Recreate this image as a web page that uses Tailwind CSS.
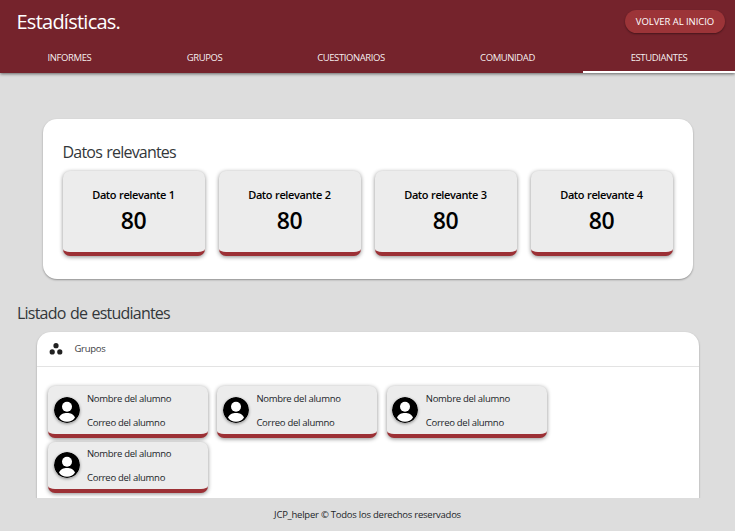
<!DOCTYPE html>
<html lang="es">
<head>
<meta charset="utf-8">
<title>Estadísticas</title>
<script src="https://cdn.jsdelivr.net/npm/@tailwindcss/browser@4"></script>
</head>
<body class="flex h-[531px] w-[735px] flex-col overflow-hidden bg-[#dddddd] font-['Open_Sans','Noto_Sans',sans-serif] text-[#212529]">
<svg class="hidden">
  <symbol id="avatar" viewBox="0 0 26 26">
    <circle cx="13" cy="13" r="13" fill="#000"/>
    <circle cx="13" cy="9.8" r="5" fill="#fff"/>
    <path d="M5 20.6C6.300 17.200 9.400 16 13 16s6.700 1.200 8 4.600C19.200 23.600 16.200 24.800 13 24.800S6.800 23.600 5 20.600Z" fill="#fff"/>
  </symbol>
</svg>
<header class="relative z-10 h-[73px] shrink-0 bg-[#75232c] text-white shadow-[0_1px_3px_rgba(0,0,0,0.55)]">
  <div class="flex h-[42px] items-center justify-between pr-[10px] pl-[16.500px]">
    <h1 class="pt-px text-[20px] leading-[42px] tracking-[-0.75px]"><span>Estadísticas.</span></h1>
    <button class="h-[23px] w-[100px] rounded-full bg-[#9c3438] text-[9.500px] leading-[23px] tracking-[-0.05px] whitespace-nowrap shadow-[0_1px_2px_rgba(0,0,0,0.4)]"><span>VOLVER AL INICIO</span></button>
  </div>
  <nav class="grid h-[31px] grid-cols-[139px_131px_162px_151px_152px] text-center text-[9.500px] leading-[31px] tracking-[-0.4px] text-white/95">
    <a><span>INFORMES</span></a>
    <a><span>GRUPOS</span></a>
    <a><span>CUESTIONARIOS</span></a>
    <a><span>COMUNIDAD</span></a>
    <a class="h-[31px] border-b-2 border-white"><span>ESTUDIANTES</span></a>
  </nav>
</header>
<main class="min-h-0 flex-1 overflow-hidden">
  <section class="mt-[46px] ml-[42.500px] h-[159.500px] w-[650px] rounded-[14px] bg-white pt-[23px] pr-[20px] pl-[20px] shadow-[0_1px_2px_rgba(0,0,0,0.35)]">
    <h2 class="h-[29px] text-[16px] leading-[21px] tracking-[-0.8px] text-[#33373a] [word-spacing:1px]"><span>Datos relevantes</span></h2>
    <div class="grid grid-cols-[142px_142px_142px_142px] gap-[14px] text-center text-black">
      <article class="h-[85px] rounded-[7px] border-b-4 border-[#9c3035] bg-[#ececec] pt-[15px] shadow-[0_1px_4px_rgba(0,0,0,0.45)]">
        <h3 class="text-[11px] leading-[18px] font-semibold tracking-[-0.4px] [word-spacing:0.5px]"><span>Dato relevante 1</span></h3>
        <p class="text-[23px] leading-[33px] font-semibold tracking-[-0.4px]"><span>80</span></p>
      </article>
      <article class="h-[85px] rounded-[7px] border-b-4 border-[#9c3035] bg-[#ececec] pt-[15px] shadow-[0_1px_4px_rgba(0,0,0,0.45)]">
        <h3 class="text-[11px] leading-[18px] font-semibold tracking-[-0.4px] [word-spacing:0.5px]"><span>Dato relevante 2</span></h3>
        <p class="text-[23px] leading-[33px] font-semibold tracking-[-0.4px]"><span>80</span></p>
      </article>
      <article class="h-[85px] rounded-[7px] border-b-4 border-[#9c3035] bg-[#ececec] pt-[15px] shadow-[0_1px_4px_rgba(0,0,0,0.45)]">
        <h3 class="text-[11px] leading-[18px] font-semibold tracking-[-0.4px] [word-spacing:0.5px]"><span>Dato relevante 3</span></h3>
        <p class="text-[23px] leading-[33px] font-semibold tracking-[-0.4px]"><span>80</span></p>
      </article>
      <article class="h-[85px] rounded-[7px] border-b-4 border-[#9c3035] bg-[#ececec] pt-[15px] shadow-[0_1px_4px_rgba(0,0,0,0.45)]">
        <h3 class="text-[11px] leading-[18px] font-semibold tracking-[-0.4px] [word-spacing:0.5px]"><span>Dato relevante 4</span></h3>
        <p class="text-[23px] leading-[33px] font-semibold tracking-[-0.4px]"><span>80</span></p>
      </article>
    </div>
  </section>
  <h2 class="mt-[22.500px] ml-[17px] h-[31px] text-[16px] leading-[24px] tracking-[-0.78px] text-[#33373a] [word-spacing:1px]"><span>Listado de estudiantes</span></h2>
  <section class="ml-[36.500px] h-[200px] w-[662px] rounded-[14px] bg-white shadow-[0_1px_2px_rgba(0,0,0,0.35)]">
    <div class="flex h-[35px] items-center border-b border-[#e3e3e3] pl-[12px]">
      <svg class="size-[14px]" viewBox="0 0 14 14" fill="#212121"><circle cx="7" cy="3.700" r="2.600"/><circle cx="3.200" cy="9.900" r="2.600"/><circle cx="10.800" cy="9.900" r="2.600"/></svg>
      <span class="ml-[12px] text-[9.500px] tracking-[-0.3px] text-[#3d4043]">Grupos</span>
    </div>
    <div class="grid grid-cols-[160px_160px_160px] gap-x-[9.400px] gap-y-[4px] pt-[19px] pl-[11.500px] text-[9.500px] leading-[24px] tracking-[-0.28px]">
      <article class="flex h-[51.500px] items-center rounded-[7px] border-b-4 border-[#9c3035] bg-[#ececec] pl-[5.500px] shadow-[0_1px_4px_rgba(0,0,0,0.45)]">
        <svg class="size-[26px] rounded-full shadow-[0_1px_3px_rgba(0,0,0,0.4)]"><use href="#avatar"/></svg>
        <div class="ml-[7.500px] pt-[2px]"><p><span>Nombre del alumno</span></p><p><span>Correo del alumno</span></p></div>
      </article>
      <article class="flex h-[51.500px] items-center rounded-[7px] border-b-4 border-[#9c3035] bg-[#ececec] pl-[5.500px] shadow-[0_1px_4px_rgba(0,0,0,0.45)]">
        <svg class="size-[26px] rounded-full shadow-[0_1px_3px_rgba(0,0,0,0.4)]"><use href="#avatar"/></svg>
        <div class="ml-[7.500px] pt-[2px]"><p><span>Nombre del alumno</span></p><p><span>Correo del alumno</span></p></div>
      </article>
      <article class="flex h-[51.500px] items-center rounded-[7px] border-b-4 border-[#9c3035] bg-[#ececec] pl-[5.500px] shadow-[0_1px_4px_rgba(0,0,0,0.45)]">
        <svg class="size-[26px] rounded-full shadow-[0_1px_3px_rgba(0,0,0,0.4)]"><use href="#avatar"/></svg>
        <div class="ml-[7.500px] pt-[2px]"><p><span>Nombre del alumno</span></p><p><span>Correo del alumno</span></p></div>
      </article>
      <article class="flex h-[51.500px] items-center rounded-[7px] border-b-4 border-[#9c3035] bg-[#ececec] pl-[5.500px] shadow-[0_1px_4px_rgba(0,0,0,0.45)]">
        <svg class="size-[26px] rounded-full shadow-[0_1px_3px_rgba(0,0,0,0.4)]"><use href="#avatar"/></svg>
        <div class="ml-[7.500px] pt-[2px]"><p><span>Nombre del alumno</span></p><p><span>Correo del alumno</span></p></div>
      </article>
    </div>
  </section>
</main>
<footer class="relative z-10 h-[33.500px] shrink-0 bg-[#dddddd] text-center text-[9.500px] leading-[33px] tracking-[-0.24px]"><span>JCP_helper © Todos los derechos reservados</span></footer>
</body>
</html>
